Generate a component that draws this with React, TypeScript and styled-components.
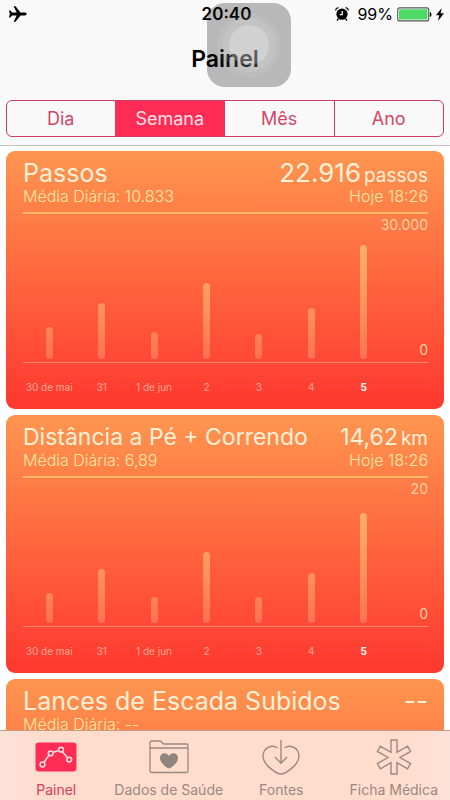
import React, { useState } from "react";
import styled, { createGlobalStyle } from "styled-components";

const GlobalStyle = createGlobalStyle`
  *, *::before, *::after { box-sizing: border-box; }
  body {
    margin: 0;
    background: #fff;
    font-family: Inter, "Liberation Sans", sans-serif;
    color: #000;
  }
  button { font: inherit; }
`;

const Page = styled.div`
  position: relative;
  display: flex;
  flex-direction: column;
  height: 100vh;
  overflow: hidden;
`;

const TopArea = styled.header`
  flex: none;
  display: flex;
  flex-direction: column;
  background: #f9f9f9;
  border-bottom: 1px solid #c6c3c5;
`;

const StatusBar = styled.div`
  display: grid;
  grid-template-columns: 1fr auto 1fr;
  align-items: center;
  height: 28px;
  padding: 0 6px 0 9px;
  font-size: 17px;
`;

const Clock = styled.time`
  font-weight: 600;
`;

const StatusRight = styled.div`
  display: flex;
  align-items: center;
  justify-content: flex-end;
  gap: 4px;
  font-size: 16px;
`;

const AlarmSlot = styled.span`
  display: flex;
  margin-right: 4px;
`;

const PageTitle = styled.h1`
  margin: 0;
  padding-top: 16px;
  font-size: 23px;
  line-height: 30px;
  font-weight: 600;
  text-align: center;
`;

const Segments = styled.div`
  display: grid;
  grid-template-columns: 108fr 110fr 110fr 110fr;
  height: 37px;
  margin: 26px 6px 8px;
  border: 1px solid #d03c60;
  border-radius: 6px;
  overflow: hidden;
`;

const Segment = styled.button<{ $active: boolean }>`
  padding: 0;
  border: 0;
  border-left: 1px solid ${(p) => (p.$active ? "#ff2d55" : "#d03c60")};
  font-size: 18px;
  background: ${(p) => (p.$active ? "#ff2d55" : "transparent")};
  color: ${(p) => (p.$active ? "#ffe0e6" : "#d24666")};
  &:first-child { border-left: 0; }
`;

const Content = styled.main`
  flex: 1;
  min-height: 0;
  display: flex;
  flex-direction: column;
  gap: 6px;
  padding: 5px 6px 6px;
  overflow-y: auto;
  scrollbar-width: none;
`;

const Card = styled.article`
  flex: none;
  min-height: 258px;
  padding: 8px 16px 0 17px;
  border-radius: 9px;
  background: linear-gradient(#ff9650 0%, #ff6a40 45%, #ff3b30 96%);
`;

const CardRow = styled.div`
  display: flex;
  justify-content: space-between;
  align-items: baseline;
  white-space: nowrap;
`;

const CardTitle = styled.h2<{ $long: boolean }>`
  margin: 0;
  font-size: ${(p) => (p.$long ? 23 : 25)}px;
  line-height: 28px;
  font-weight: 400;
  color: #fff0d8;
`;

const CardValue = styled.div<{ $long: boolean }>`
  font-size: ${(p) => (p.$long ? 23 : 26)}px;
  line-height: 28px;
  font-weight: 400;
  color: #fff0d8;
`;

const Unit = styled.span`
  margin-left: 3px;
  font-size: 19px;
  line-height: 20px;
`;

const CardMeta = styled.div`
  font-size: 16px;
  line-height: 19px;
  font-weight: 300;
  color: #ffe9a4;
`;

const Chart = styled.div`
  margin-top: 6px;
  border-top: 2px solid #ffb865;
`;

const Plot = styled.div`
  display: grid;
  grid-template-columns: repeat(7, 1fr) 38px;
  height: 149px;
  padding-bottom: 3px;
  border-bottom: 1px solid #ff8a62;
`;

const BarSlot = styled.div`
  display: flex;
  align-items: flex-end;
  justify-content: center;
`;

const Bar = styled.div`
  width: 7px;
  border-radius: 4px;
  background: linear-gradient(rgba(255, 186, 108, 0.85), rgba(255, 176, 125, 0.38)) bottom / 100% 115px no-repeat;
`;

const Scale = styled.div`
  display: flex;
  flex-direction: column;
  align-items: flex-end;
  justify-content: space-between;
  padding-top: 2px;
  font-size: 14px;
  line-height: 18px;
  color: #ffcf9f;
`;

const Days = styled.div`
  display: grid;
  grid-template-columns: repeat(7, 1fr) 38px;
  padding-top: 16px;
  font-size: 10px;
  line-height: 16px;
  text-align: center;
  white-space: nowrap;
`;

const Day = styled.span<{ $today: boolean }>`
  color: ${(p) => (p.$today ? "#fff" : "#ffa791")};
  font-weight: ${(p) => (p.$today ? 700 : 400)};
`;

const TabBar = styled.nav`
  flex: none;
  display: grid;
  grid-template-columns: repeat(4, 1fr);
  height: 70px;
  border-top: 1px solid #c99a86;
  background: linear-gradient(90deg, #fde2d8, #ffdccb 12%, #ffdccb 88%, #fde2d8);
`;

const Tab = styled.button<{ $active: boolean }>`
  display: flex;
  flex-direction: column;
  align-items: center;
  gap: 3px;
  padding: 6px 0 0;
  border: 0;
  background: none;
  font-size: 14px;
  line-height: 20px;
  white-space: nowrap;
  color: ${(p) => (p.$active ? "#d63c5e" : "#998983")};
`;

const TouchButton = styled.button`
  position: absolute;
  top: 3px;
  left: calc(50% - 18px);
  display: grid;
  place-items: center;
  width: 84px;
  height: 84px;
  padding: 0;
  border: 0;
  border-radius: 18px;
  background: rgba(0, 0, 0, 0.26);
`;

const Ring = styled.span<{ $size: number; $alpha: number }>`
  display: grid;
  place-items: center;
  width: ${(p) => p.$size}px;
  height: ${(p) => p.$size}px;
  border-radius: 50%;
  background: rgba(255, 255, 255, ${(p) => p.$alpha});
`;

const PlaneIcon = () => (
  <svg width="18" height="18" viewBox="0 0 18 18" aria-label="Modo avião">
    <path d="M0 5.500h1.400l1.700 2.100h4.600L4.600 1.200h1.900l5 6.400h4.300c1.100 0 1.900.7 1.900 1.400s-.8 1.400-1.900 1.400h-4.300l-5 6.400H4.600l3.100-6.400H3.100l-1.700 2.100H0l.8-3.500z" />
  </svg>
);

const AlarmIcon = () => (
  <svg width="14" height="14" viewBox="0 0 14 14" aria-label="Alarme">
    <circle cx="7" cy="7.200" r="5.600" />
    <path d="M3.200 12 2 13.400M10.800 12 12 13.400" stroke="#000" strokeWidth="1.500" />
    <path d="M.6 3.600A3 3 0 0 1 3.600.7M13.400 3.600A3 3 0 0 0 10.400.7" fill="none" stroke="#000" strokeWidth="1.100" />
    <path d="M7.200 4v3.700H4.800" fill="none" stroke="#fff" strokeWidth="1.200" />
  </svg>
);

const BatteryIcon = () => (
  <svg width="35" height="15" viewBox="0 0 35 15" aria-label="Bateria">
    <rect x=".7" y=".9" width="31" height="13" rx="2" fill="#fff" stroke="#555" strokeWidth="1.100" />
    <rect x="2" y="2.200" width="28.400" height="10.400" rx=".8" fill="#4cd964" />
    <path d="M32.800 5c2.200.5 2.200 4.500 0 5z" />
  </svg>
);

const BoltIcon = () => (
  <svg width="8" height="13" viewBox="0 0 8 13" aria-label="Carregando">
    <path d="M5.700 0 0 7.200h3.300L2 13l6-7.700H4.600z" />
  </svg>
);

const DashboardIcon = () => (
  <svg width="42" height="40" viewBox="0 0 42 40" aria-hidden="true">
    <rect x=".5" y="5.500" width="41" height="29" rx="3" fill="#ff2d55" />
    <g fill="none" stroke="#ffe2dc" strokeWidth="1.500">
      <path d="M9 25.500 14 18.200M18.300 15.500l5.400-2.300M27.500 14.700l5.200 6.200" />
      <circle cx="7.500" cy="27.500" r="2.400" />
      <circle cx="15.700" cy="16.300" r="2.400" />
      <circle cx="26" cy="12.700" r="2.400" />
      <circle cx="34.200" cy="22.600" r="2.400" />
    </g>
  </svg>
);

const FolderIcon = () => (
  <svg width="42" height="40" viewBox="0 0 42 40" aria-hidden="true">
    <path
      d="M2 34V5.500A1.500 1.500 0 0 1 3.500 4H12c2 0 2.200 3 4.200 3h22.300A1.500 1.500 0 0 1 40 8.500V34a1.500 1.500 0 0 1-1.500 1.500h-35A1.500 1.500 0 0 1 2 34zM2 11h38"
      fill="none"
      stroke="#998983"
      strokeWidth="1.300"
    />
    <path d="M21 31.500c-1.200 0-9-5.200-9-10.300 0-5.600 6.800-6.600 9-2.300 2.200-4.300 9-3.300 9 2.300 0 5.100-7.800 10.300-9 10.300z" fill="#8f8480" />
  </svg>
);

const SourcesIcon = () => (
  <svg width="42" height="40" viewBox="0 0 42 40" aria-hidden="true">
    <g fill="none" stroke="#998983" strokeWidth="1.400">
      <path d="M17.500 10.800C12 7.400 3 10.400 3 19.300 3 28.500 17.500 37 21 37s18-8.500 18-17.700c0-8.900-9-11.900-14.500-8.500" />
      <path d="M21 3v23M15 20l6 6.200 6-6.200" />
    </g>
  </svg>
);

const MedicalIcon = () => (
  <svg width="42" height="40" viewBox="0 0 42 40" aria-hidden="true">
    <path
      d="M18 3h6v12.300l10.600-6.100 3 5.200L27 20.500l10.600 6.100-3 5.200L24 25.700V37h-6V25.700L7.400 31.800l-3-5.200L15 20.500 4.400 14.400l3-5.200L18 15.300z"
      fill="none"
      stroke="#998983"
      strokeWidth="1.400"
    />
  </svg>
);

interface Metric {
  title: string;
  value: string;
  unit?: string;
  average: string;
  updated?: string;
  max?: string;
  long?: boolean;
  bars: number[];
}

const metrics: Metric[] = [
  {
    title: "Passos",
    value: "22.916",
    unit: "passos",
    average: "10.833",
    updated: "Hoje 18:26",
    max: "30.000",
    bars: [32, 56, 27, 76, 25, 51, 114],
  },
  {
    title: "Distância a Pé + Correndo",
    value: "14,62",
    unit: "km",
    average: "6,89",
    updated: "Hoje 18:26",
    max: "20",
    long: true,
    bars: [30, 54, 26, 71, 26, 50, 110],
  },
  { title: "Lances de Escada Subidos", value: "--", average: "--", bars: [] },
];

const days = ["30 de mai", "31", "1 de jun", "2", "3", "4", "5"];
const periods = ["Dia", "Semana", "Mês", "Ano"];
const tabs = [
  { label: "Painel", Icon: DashboardIcon },
  { label: "Dados de Saúde", Icon: FolderIcon },
  { label: "Fontes", Icon: SourcesIcon },
  { label: "Ficha Médica", Icon: MedicalIcon },
];

const MetricCard = ({ metric }: { metric: Metric }) => (
  <Card>
    <CardRow>
      <CardTitle $long={!!metric.long}>{metric.title}</CardTitle>
      <CardValue $long={!!metric.long}>
        {metric.value}
        {metric.unit && <Unit>{metric.unit}</Unit>}
      </CardValue>
    </CardRow>
    <CardRow>
      <CardMeta>Média Diária: {metric.average}</CardMeta>
      {metric.updated && <CardMeta>{metric.updated}</CardMeta>}
    </CardRow>
    {metric.bars.length > 0 && (
      <Chart>
        <Plot>
          {metric.bars.map((height, i) => (
            <BarSlot key={days[i]}>
              <Bar style={{ height }} />
            </BarSlot>
          ))}
          <Scale>
            <span>{metric.max}</span>
            <span>0</span>
          </Scale>
        </Plot>
        <Days>
          {days.map((day, i) => (
            <Day key={day} $today={i === days.length - 1}>
              {day}
            </Day>
          ))}
        </Days>
      </Chart>
    )}
  </Card>
);

export default function App() {
  const [period, setPeriod] = useState("Semana");
  const [tab, setTab] = useState("Painel");

  return (
    <>
      <GlobalStyle />
      <Page>
        <TopArea>
          <StatusBar>
            <PlaneIcon />
            <Clock>20:40</Clock>
            <StatusRight>
              <AlarmSlot>
                <AlarmIcon />
              </AlarmSlot>
              <span>99%</span>
              <BatteryIcon />
              <BoltIcon />
            </StatusRight>
          </StatusBar>
          <PageTitle>Painel</PageTitle>
          <Segments role="group" aria-label="Período">
            {periods.map((name) => (
              <Segment
                key={name}
                type="button"
                $active={name === period}
                aria-pressed={name === period}
                onClick={() => setPeriod(name)}
              >
                {name}
              </Segment>
            ))}
          </Segments>
        </TopArea>
        <Content>
          {metrics.map((metric) => (
            <MetricCard key={metric.title} metric={metric} />
          ))}
        </Content>
        <TabBar>
          {tabs.map(({ label, Icon }) => (
            <Tab
              key={label}
              type="button"
              $active={label === tab}
              aria-current={label === tab ? "page" : undefined}
              onClick={() => setTab(label)}
            >
              <Icon />
              {label}
            </Tab>
          ))}
        </TabBar>
        <TouchButton type="button" aria-label="AssistiveTouch">
          <Ring $size={64} $alpha={0.07}>
            <Ring $size={54} $alpha={0.1}>
              <Ring $size={40} $alpha={0.24} />
            </Ring>
          </Ring>
        </TouchButton>
      </Page>
    </>
  );
}
